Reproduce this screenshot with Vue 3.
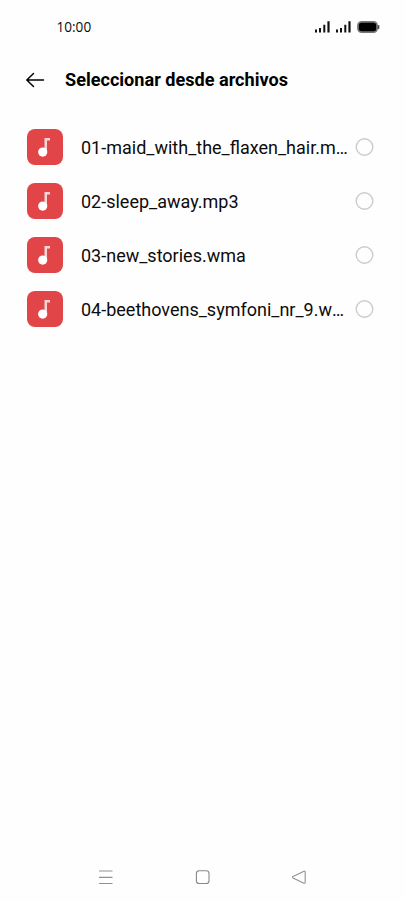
<script setup>
const files = [
  '01-maid_with_the_flaxen_hair.mp3',
  '02-sleep_away.mp3',
  '03-new_stories.wma',
  '04-beethovens_symfoni_nr_9.wma',
]
</script>

<template>
  <div class="screen">
    <div class="status">
      <span class="clock">10:00</span>
      <svg class="indicators" width="66" height="14" viewBox="0 0 66 14">
        <g fill="#111">
          <path v-for="x in [0, 21]" :key="x" :transform="`translate(${x} 0)`" d="M1 9.600h2v3H1zM5 8h2v4.600H5zM9.300 4.800h2v7.800h-2zM13.400 1.200h2.200v11.400h-2.200z" />
        </g>
        <rect x="44" y="1.900" width="19.100" height="10.200" rx="3.600" fill="#000" stroke="#777" stroke-width="1.800" />
        <rect x="45.500" y="3.200" width="16.200" height="7.600" rx="2.200" fill="#000" />
        <path d="M64.700 5.600v3" stroke="#333" stroke-width="1.200" stroke-linecap="round" />
      </svg>
    </div>
    <header class="header">
      <svg class="back" width="20" height="16" viewBox="0 0 20 16" fill="none" stroke="#000" stroke-width="1.500" stroke-linecap="round" stroke-linejoin="round">
        <path d="M8.500 1.500 1.800 8 8.500 14.500M2 8H18.500" />
      </svg>
      <h1>Seleccionar desde archivos</h1>
    </header>
    <ul class="list">
      <li v-for="name in files" :key="name" class="row">
        <svg class="tile" width="36" height="36" viewBox="0 0 36 36">
          <rect width="36" height="36" rx="8" fill="#e14548" />
          <path d="M17.500 9h5.500v2.600h-3v11.400h-2.500z" fill="#fad3d3" />
          <circle cx="15.700" cy="23.100" r="4.600" fill="#fff" />
        </svg>
        <span class="name">{{ name }}</span>
        <svg class="radio" width="20" height="20" viewBox="0 0 20 20">
          <circle cx="10.500" cy="10" r="8.300" fill="none" stroke="#ccc" stroke-width="1.400" />
        </svg>
      </li>
    </ul>
    <nav class="nav">
      <svg width="16" height="16" viewBox="0 0 16 16" fill="none" stroke="#929292" stroke-width="1.200">
        <path d="M1 2h13.500M1 8.300h13.500M1 14.500h13.500" />
      </svg>
      <svg width="16" height="16" viewBox="0 0 16 16" fill="none" stroke="#888" stroke-width="1.100">
        <rect x="1.400" y="1.700" width="12.600" height="12.800" rx="2.800" />
      </svg>
      <svg width="16" height="16" viewBox="0 0 16 16" fill="none" stroke="#929292" stroke-width="1.100" stroke-linejoin="round">
        <path d="M13 2.200 2 7.400q-1 .8 0 1.500L13 14.200q1.200.3 1.200-1V3.200q0-1.300-1.200-1z" />
      </svg>
    </nav>
  </div>
</template>

<style>
body {
  background: #fefefe;
}
</style>

<style scoped>
.screen {
  display: flex;
  flex-direction: column;
  box-sizing: border-box;
  width: 405px;
  height: 902px;
  background: #fefefe;
  color: #0c0c0c;
  font-family: Roboto, "Liberation Sans", sans-serif;
}
.status {
  display: flex;
  align-items: center;
  justify-content: space-between;
  height: 54px;
  padding: 0 25px 0 56.500px;
}
.clock {
  font: 13.600px/20px "Open Sans", "Noto Sans", sans-serif;
}
.header {
  display: flex;
  align-items: center;
  gap: 20px;
  height: 52px;
  padding-left: 25px;
}
h1 {
  margin: 0;
  font-size: 18.100px;
  font-weight: 700;
  line-height: 24px;
  color: #000;
}
.list {
  margin: 0;
  padding: 14px 31px 0 27px;
  list-style: none;
}
.row {
  display: flex;
  align-items: center;
  height: 54.100px;
}
.tile {
  flex: none;
  margin-right: 18px;
}
.name {
  width: 268px;
  padding-top: 2px;
  overflow: hidden;
  font-size: 18px;
  line-height: 26px;
  white-space: nowrap;
  text-overflow: ellipsis;
}
.radio {
  flex: none;
  margin-left: 5px;
}
.nav {
  display: flex;
  justify-content: space-between;
  margin-top: auto;
  padding: 0 98px 17px;
}
</style>
